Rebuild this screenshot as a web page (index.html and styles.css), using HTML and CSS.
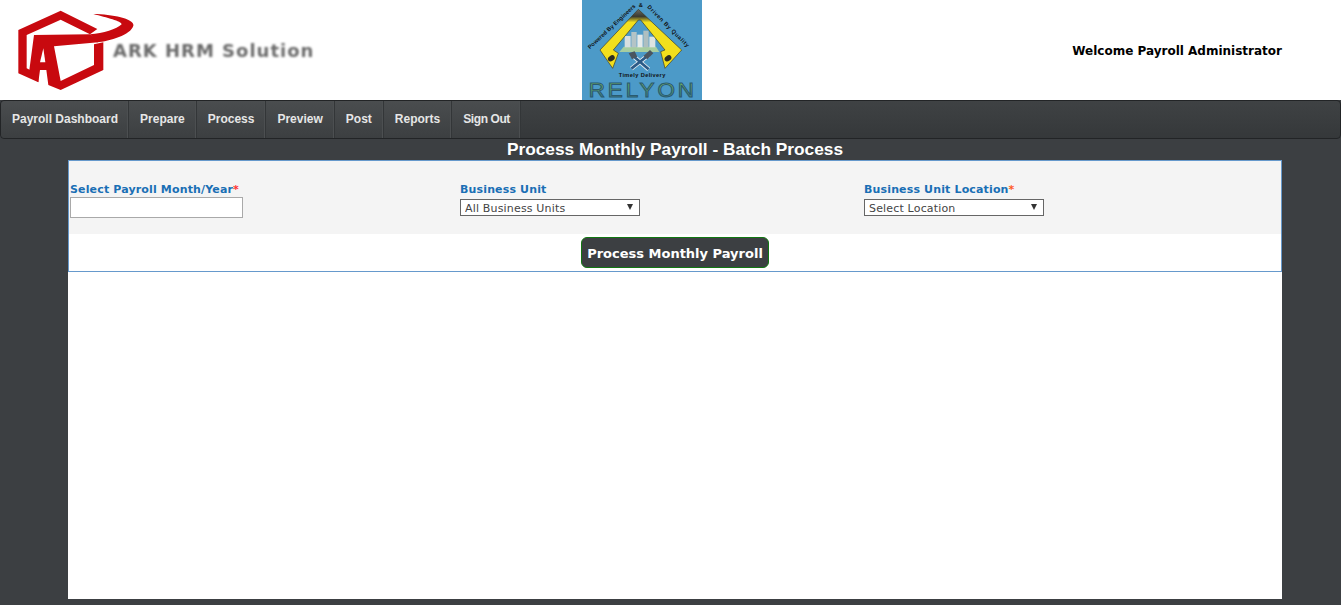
FILE: index.html
```html
<!DOCTYPE html>
<html lang="en">
<head>
    <meta charset="UTF-8">
    <meta name="viewport" content="width=device-width, initial-scale=1.0">
    <title>Process Monthly Payroll</title>
    <link rel="stylesheet" href="styles.css">
</head>
<body>
    <header class="topHeader">
        <div class="brand">
            <svg class="brandMark" width="130" height="90" viewBox="0 0 390 270">
                <path fill="#c8090f" d="M152 17 L262 72 L240 88 L152 44 L50 90 L50 190 L85 208 L85 232 L25 205 L25 75 Z"/>
                <path fill="#c8090f" d="M72 90 L240 88 L265 112 L132 124 L152 228 L252 180 L252 118 L280 112 L280 195 L152 255 L115 240 L109 195 L90 195 L85 232 L58 195 Z"/>
                <path fill="#c8090f" d="M250 27 C310 28 375 42 370 62 C362 90 300 108 260 112 L240 88 C280 85 320 72 335 58 C335 48 290 38 250 27 Z"/>
                <path fill="#ffffff" d="M100 130 L106 172 L90 172 Z"/>
            </svg>
            <span class="brandName">ARK HRM Solution</span>
        </div>
        <div class="relyon">
            <svg width="120" height="100" viewBox="0 0 360 300">
                <defs>
                    <linearGradient id="armFill" x1="0" y1="0" x2="0" y2="1">
                        <stop offset="0" stop-color="#6b6a62"/>
                        <stop offset="0.12" stop-color="#3a3a30"/>
                        <stop offset="0.22" stop-color="#f2e01e"/>
                        <stop offset="1" stop-color="#f2de1c"/>
                    </linearGradient>
                    <linearGradient id="wordFill" x1="0" y1="0" x2="0" y2="1">
                        <stop offset="0" stop-color="#8cc65a"/>
                        <stop offset="0.55" stop-color="#5a9e70"/>
                        <stop offset="1" stop-color="#2f6f9a"/>
                    </linearGradient>
                </defs>
                <rect width="360" height="300" fill="#4c9ac8"/>
                <g class="relyonArt">
                    <path fill="#a6cda0" d="M125 140 L222 140 L232 156 L112 156 Z"/>
                    <rect x="128" y="108" width="18" height="34" fill="#d8dfe0"/>
                    <rect x="148" y="96" width="16" height="46" fill="#b4c4c6"/>
                    <rect x="166" y="104" width="16" height="38" fill="#e6ebea"/>
                    <rect x="184" y="92" width="16" height="50" fill="#aebfc0"/>
                    <rect x="202" y="110" width="18" height="32" fill="#dde3e2"/>
                    <path fill="url(#armFill)" stroke="#3d3a20" stroke-width="2" d="M169 28 L54 150 L92 205 L109 160 L94 150 L169 60 L176 60 L249 150 L236 155 L249 205 L299 150 Z"/>
                    <ellipse cx="88" cy="175" rx="11" ry="8" fill="#2d2d22" transform="rotate(-35 88 175)"/>
                    <ellipse cx="258" cy="175" rx="11" ry="8" fill="#2d2d22" transform="rotate(-35 258 175)"/>
                    <path fill="none" stroke="#e8eef2" stroke-width="13" d="M148 206 L200 165 M150 165 L200 208"/>
                    <path fill="none" stroke="#2c5a86" stroke-width="8" d="M148 206 L200 165 M150 165 L200 208"/>
                    <path fill="#4a5560" d="M140 160 L158 154 L166 170 L150 178 Z M184 168 L204 150 L214 160 L196 178 Z"/>
                </g>
                <path id="arcLeft" fill="none" d="M24 148 L162 20"/>
                <path id="arcRight" fill="none" d="M195 22 L316 144"/>
                <text class="relyonTiny" textLength="188"><textPath href="#arcLeft">Powered By Engineers</textPath></text>
                <text class="relyonTiny" textLength="170"><textPath href="#arcRight">Driven By Quality</textPath></text>
                <text class="relyonTiny" x="170" y="20">&amp;</text>
                <text class="relyonTiny" x="110" y="231" textLength="140">Timely Delivery</text>
                <text class="relyonWord" x="20" y="290" textLength="325" lengthAdjust="spacingAndGlyphs">RELYON</text>
            </svg>
        </div>
        <div class="welcome">Welcome Payroll Administrator</div>
    </header>

    <nav class="mainNav">
        <a href="#">Payroll Dashboard</a>
        <a href="#">Prepare</a>
        <a href="#">Process</a>
        <a href="#">Preview</a>
        <a href="#">Post</a>
        <a href="#">Reports</a>
        <a href="#">Sign Out</a>
    </nav>

    <main class="content">
        <h1 class="pageTitle">Process Monthly Payroll - Batch Process</h1>
        <div class="sheet">
            <form class="panel">
                <div class="fields">
                    <div class="field">
                        <label for="month">Select Payroll Month/Year<span class="req">*</span></label>
                        <input type="text" id="month" class="monthInput">
                    </div>
                    <div class="field">
                        <label for="unit">Business Unit</label>
                        <div class="selectWrap">
                            <select id="unit"><option>All Business Units</option></select>
                        </div>
                    </div>
                    <div class="field">
                        <label for="location">Business Unit Location<span class="req orange">*</span></label>
                        <div class="selectWrap">
                            <select id="location"><option>Select Location</option></select>
                        </div>
                    </div>
                </div>
                <div class="actions">
                    <button type="button" class="processBtn">Process Monthly Payroll</button>
                </div>
            </form>
        </div>
    </main>
</body>
</html>
```

FILE: styles.css
```css
* {
    box-sizing: border-box;
}
body {
    margin: 0;
    height: 605px;
    overflow: hidden;
    background-color: #3c3f42;
    font-family: "DejaVu Sans", Verdana, sans-serif;
}
.topHeader {
    display: grid;
    grid-template-columns: 582px 120px 1fr;
    height: 100px;
    background-color: #ffffff;
}
.brand {
    display: flex;
    align-items: flex-start;
    padding: 5px 0 0 10px;
}
.brandMark {
    flex: none;
    filter: blur(0.4px);
}
.brandName {
    margin: 36px 0 0 -27px;
    font-family: "DejaVu Sans", Verdana, sans-serif;
    font-size: 18px;
    font-weight: bold;
    line-height: 20px;
    letter-spacing: 1px;
    color: #6b6b6b;
    filter: blur(0.8px);
    white-space: nowrap;
}
.relyon svg {
    display: block;
}
.relyonArt {
    filter: blur(0.4px);
}
.relyonTiny {
    font-family: "Liberation Sans", Arial, sans-serif;
    font-size: 17px;
    font-weight: bold;
    fill: #111111;
}
.relyonWord {
    font-family: "Liberation Sans", Arial, sans-serif;
    font-size: 60px;
    letter-spacing: 8px;
    fill: url(#wordFill);
    stroke: #2a5a70;
    stroke-width: 3;
}
.welcome {
    padding: 44px 59px 0 0;
    text-align: right;
    font-size: 12px;
    font-weight: bold;
    color: #000000;
}
.mainNav {
    display: flex;
    height: 39px;
    border: 1px solid #222426;
    border-radius: 4px;
    background: linear-gradient(#3f4244, #35383a);
}
.mainNav a {
    padding: 0 11px;
    border-right: 1px solid #333638;
    box-shadow: inset -1px 0 0 #4c4f51;
    background: linear-gradient(#4a4d4f, #3c3f41);
    font-family: "Liberation Sans", Arial, sans-serif;
    font-size: 12px;
    font-weight: bold;
    line-height: 37px;
    color: #e6e6e6;
    text-decoration: none;
}
.mainNav a:first-child {
    padding-right: 10px;
    border-radius: 4px 0 0 4px;
}
.mainNav a:last-child {
    padding-right: 10px;
    letter-spacing: -0.4px;
}
.content {
    padding: 0 59px 0 68px;
}
.pageTitle {
    margin: 0;
    height: 21px;
    text-align: center;
    font-family: "Liberation Sans", Arial, sans-serif;
    font-size: 17.3px;
    line-height: 20px;
    font-weight: bold;
    color: #ffffff;
}
.sheet {
    height: 439px;
    background-color: #ffffff;
}
.panel {
    height: 112px;
    border: 1px solid #6699cc;
}
.fields {
    display: grid;
    grid-template-columns: 390px 404px 1fr;
    height: 73px;
    padding: 22px 0 0 1px;
    background-color: #f4f4f4;
}
.field label {
    display: block;
    height: 14px;
    font-size: 11px;
    font-weight: bold;
    line-height: 14px;
    letter-spacing: 0.15px;
    color: #1a6fb5;
}
.req {
    color: #ff3333;
}
.req.orange {
    color: #ff5a1f;
}
.monthInput {
    display: block;
    width: 173px;
    height: 21px;
    border: 1px solid #a9a9a9;
    background-color: #ffffff;
}
.selectWrap {
    position: relative;
    width: 180px;
    margin-top: 2px;
}
.selectWrap select {
    display: block;
    width: 100%;
    height: 17px;
    padding: 2px 0 0 4px;
    border: 1px solid #666666;
    border-radius: 0;
    appearance: none;
    background-color: #ffffff;
    font-family: "DejaVu Sans", Verdana, sans-serif;
    font-size: 11px;
    letter-spacing: 0.17px;
    color: #444444;
}
/* arrow sits over the select */
.selectWrap::after {
    content: "";
    position: absolute;
    top: 5px;
    right: 7px;
    border-style: solid;
    border-width: 6px 3.5px 0;
    border-color: #333333 transparent transparent;
}
.actions {
    display: flex;
    justify-content: center;
    padding: 3px 0 0;
}
.processBtn {
    width: 188px;
    height: 31px;
    padding: 1px 0 0;
    border: 1px solid #117711;
    border-radius: 6px;
    background-color: #3c3f42;
    font-family: "DejaVu Sans", Verdana, sans-serif;
    font-size: 13px;
    font-weight: bold;
    color: #ffffff;
}
```
